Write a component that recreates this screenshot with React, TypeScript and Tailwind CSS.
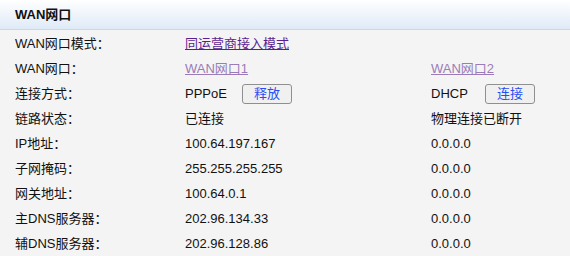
import React from 'react'

type Row = {
  label: string
  a: React.ReactNode
  b?: React.ReactNode
}

const Btn = ({ children }: { children: React.ReactNode }) => (
  <button className="ml-auto h-[20px] w-[50px] rounded-[3px] border border-[#8f8f8f] bg-[#f0f0f0] text-[13px] leading-none text-[#2a4cf5]">
    {children}
  </button>
)

export default function App() {
  const rows: Row[] = [
    {
      label: 'WAN网口：',
      a: <a href="#" className="text-[#9b7bb8] underline">WAN网口1</a>,
      b: <a href="#" className="text-[#9b7bb8] underline">WAN网口2</a>,
    },
    {
      label: '连接方式：',
      a: (
        <div className="flex w-[107px] items-center">
          <span>PPPoE</span>
          <Btn>释放</Btn>
        </div>
      ),
      b: (
        <div className="flex w-[104px] items-center">
          <span>DHCP</span>
          <Btn>连接</Btn>
        </div>
      ),
    },
    { label: '链路状态：', a: '已连接', b: '物理连接已断开' },
    { label: 'IP地址：', a: '100.64.197.167', b: '0.0.0.0' },
    { label: '子网掩码：', a: '255.255.255.255', b: '0.0.0.0' },
    { label: '网关地址：', a: '100.64.0.1', b: '0.0.0.0' },
    { label: '主DNS服务器：', a: '202.96.134.33', b: '0.0.0.0' },
    { label: '辅DNS服务器：', a: '202.96.128.86', b: '0.0.0.0' },
  ]

  return (
    <div
      className="h-[256px] w-[570px] overflow-hidden bg-[#f4f4f4] text-[13px] text-[#111]"
      style={{ fontFamily: '"Liberation Sans", "Noto Sans CJK SC", sans-serif' }}
    >
      {/* Title bar */}
      <div className="flex h-[30px] items-center border-b border-[#c6d9ee] bg-gradient-to-b from-[#ffffff] to-[#dfeaf7] pl-[15px] font-bold">
        WAN网口
      </div>

      <div className="pt-[1px]">
        <div className="flex h-[25px] items-center">
          <div className="w-[185px] pl-[15px]">WAN网口模式：</div>
          <a href="#" className="text-[#5a1f8f] underline">同运营商接入模式</a>
        </div>
        {rows.map(r => (
          <div key={r.label} className="flex h-[25px] items-center">
            <div className="w-[185px] shrink-0 pl-[15px]">{r.label}</div>
            <div className="w-[246px] shrink-0">{r.a}</div>
            <div>{r.b}</div>
          </div>
        ))}
      </div>
    </div>
  )
}
